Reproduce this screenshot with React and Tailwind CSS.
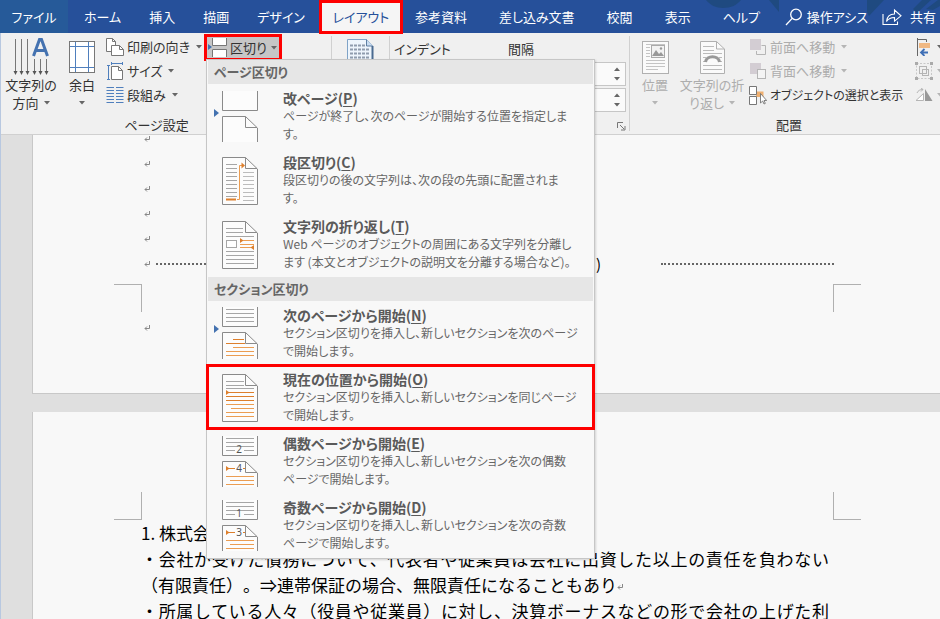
import React from "react";

function Caret({ className = "text-[#666]" }) {
  return (
    <svg width="6" height="4" viewBox="0 0 6 4" className={"shrink-0 " + className} aria-hidden="true">
      <path d="M0 0h6L3 3.6z" fill="currentColor" />
    </svg>
  );
}

function Lines({ ys, x1, x2, color = "#a6a6a6" }) {
  return ys.map((y) => (
    <path key={y} d={`M${x1} ${y}.5H${x2}`} fill="none" stroke={color} />
  ));
}

/* ---------- title bar ---------- */

function HeaderPattern() {
  return (
    <svg width="240" height="33" viewBox="0 0 240 33" className="absolute right-0 top-0" fill="#1f4a80" aria-hidden="true">
      <path d="M6 0C10 5 16 8 23 8C31 8 37 5 41 0z" />
      <path d="M69 0H79V12z" />
      <path d="M167 0H184L169 16L167 12z" />
      <path d="M213 9L222 0H231L217 13z" />
      <path d="M226 9L238 0H240V6L233 10z" />
    </svg>
  );
}

function TitleBar() {
  const before = ["ホーム", "挿入", "描画", "デザイン"];
  const after = ["参考資料", "差し込み文書", "校閲", "表示", "ヘルプ"];
  return (
    <header className="relative flex h-[33px] shrink-0 items-stretch bg-[#26509a] text-[13px] leading-5 text-white">
      <HeaderPattern />
      <nav className="relative flex items-stretch whitespace-nowrap">
        <button className="mr-[2px] w-[68px] bg-[#265a99]">ファイル</button>
        {before.map((t) => (
          <button key={t} className="px-[14px]">{t}</button>
        ))}
        <button className="h-[34px] w-[84px] border-[3px] border-[#fe0000] bg-[#f5f5f5] text-[#26509a]">レイアウト</button>
        {after.map((t, i) => (
          <button key={t} className={i === 0 ? "pl-3 pr-4" : "px-4"}>{t}</button>
        ))}
      </nav>
      <div className="relative ml-auto flex items-center gap-[14px] whitespace-nowrap pr-1">
        <button className="flex items-center gap-1">
          <svg width="18" height="18" viewBox="0 0 18 18" fill="none" stroke="white" strokeWidth="1.3" aria-hidden="true">
            <circle cx="11" cy="6.5" r="5.3" />
            <path d="M7.2 10.4L1 17" />
          </svg>
          操作アシス
        </button>
        <button className="flex items-center gap-2">
          <svg width="20" height="18" viewBox="0 0 20 18" fill="none" stroke="white" strokeWidth="1.1" aria-hidden="true">
            <path d="M1 6V16.5H15.5V13.5" />
            <path d="M4.5 13.5C5 8.5 8 6 12.5 6V2L19 7.8L12.5 13.2V9.5C9 9.5 6.5 10.5 4.5 13.5z" />
          </svg>
          共有
        </button>
      </div>
    </header>
  );
}

/* ---------- ribbon icons ---------- */

function TextDirectionIcon() {
  return (
    <svg width="36" height="38" viewBox="0 0 36 38" fill="none" aria-hidden="true">
      <path d="M2.5 1V35M8.5 1V35M14.5 1V35M21.5 21V35M27.5 21V35M33.5 21V35" stroke="#777" />
      <path d="M.5 33h4l-2 4zM6.5 33h4l-2 4zM12.5 33h4l-2 4zM19.5 33h4l-2 4zM25.5 33h4l-2 4zM31.5 33h4l-2 4z" fill="#555" />
      <path d="M20.5 18L26.5 1.5H28.5L34.5 18M22.8 12.5H32.2" stroke="#4472b0" strokeWidth="3" />
    </svg>
  );
}

function MarginsIcon() {
  return (
    <svg width="26" height="34" viewBox="0 0 26 34" fill="none" aria-hidden="true">
      <rect x=".5" y="1.5" width="25" height="31" fill="#fff" stroke="#777" />
      <path d="M6.5 2V32M19.5 2V32M1 6.5H25M1 27.5H25" stroke="#4f7fbd" />
    </svg>
  );
}

function OrientationIcon() {
  return (
    <svg width="18" height="18" viewBox="0 0 18 18" fill="#fff" stroke="#777" aria-hidden="true">
      <path d="M.5 .5H6.5L9.5 3.5V13.5H.5z" />
      <path d="M6.5 .5V3.5H9.5" fill="none" />
      <path d="M5.500 7.500H13.500L17.500 11.500V17.500H5.500z" />
      <path d="M13.500 7.500V11.500H17.500" fill="none" />
    </svg>
  );
}

function SizeIcon() {
  return (
    <svg width="18" height="18" viewBox="0 0 18 18" fill="none" aria-hidden="true">
      <path d="M5.500 4.500H12.500L16.500 8.500V17.500H5.500z" fill="#fff" stroke="#777" />
      <path d="M12.500 4.500V8.500H16.500" stroke="#777" />
      <path d="M2.500 3V17.500M1 3.500H4M1 17.500H4M5.500 1.500H16M5.500 0V3M16.500 0V3" stroke="#4f7fbd" />
    </svg>
  );
}

function ColumnsIcon() {
  return (
    <svg width="18" height="18" viewBox="0 0 18 18" fill="none" stroke="#4f7fbd" aria-hidden="true">
      {[1, 4, 7, 10, 13, 16].map((y) => (
        <path key={y} d={`M.5 ${y}.5H8M10 ${y}.5H17.500`} />
      ))}
    </svg>
  );
}

function BreaksIcon() {
  return (
    <svg width="20" height="19" viewBox="0 0 20 19" aria-hidden="true">
      <rect x="4" y="0" width="14" height="7" fill="#fff" />
      <rect x="4" y="11" width="14" height="8" fill="#fff" />
      <path d="M4.500 0V7.500H18.500V0M4.500 19V11.500H18.500V19" fill="none" stroke="#777" />
      <path d="M0 6L4 9L0 12z" fill="#4472b0" />
    </svg>
  );
}

function LineNumbersIcon() {
  return (
    <svg width="28" height="34" viewBox="0 0 28 34" fill="none" aria-hidden="true">
      <path d="M1.500 .5H20.500L26.500 7V33H1.500z" fill="#eef5fc" stroke="#7fa3c7" />
      <path d="M20.500 .5V7H26.500" fill="#c9dcf0" stroke="#5f7fa3" />
      <path d="M26.500 7V33" stroke="#4a6a90" strokeWidth="2" />
      {[6, 10, 14, 18].map((y) => (
        <path key={y} d={`M4 ${y}.5H${y < 8 ? 19 : 24}`} stroke="#8f9cad" strokeWidth="2" strokeDasharray="3 1" />
      ))}
    </svg>
  );
}

function PositionIcon() {
  return (
    <svg width="27" height="33" viewBox="0 0 27 33" fill="none" aria-hidden="true">
      <rect x=".5" y=".5" width="26" height="32" fill="#fafafa" stroke="#b0b0b0" />
      <path d="M4 3.500H23M4 6.500H8M4 9.500H8M4 12.500H8M4 15.500H8M4 19.500H23M4 22.500H23M4 25.500H23M4 28.500H16" stroke="#c4c4c4" />
      <rect x="9.500" y="4.500" width="13" height="12" fill="#f2f2f2" stroke="#aaa" />
      <path d="M10 15L14 9L17 13L19 11L22 15z" fill="#999" />
      <circle cx="19" cy="7.500" r="1.200" fill="#999" />
    </svg>
  );
}

function WrapTextIcon() {
  return (
    <svg width="25" height="33" viewBox="0 0 25 33" fill="none" aria-hidden="true">
      <path d="M.5 .5H16.500L24.500 8V32.500H.5z" fill="#fafafa" stroke="#b0b0b0" />
      <path d="M16.500 .5V8H24.500" stroke="#b0b0b0" />
      <path d="M3 5.500H14M3 9.500H14M3 12.500H22M3 16.500H6M19 16.500H22M3 20.500H5M20 20.500H22M3 24.500H22M3 28.500H22" stroke="#bbb" />
      <path d="M5.500 21C6.500 14 18.500 14 19.500 21" stroke="#999" strokeWidth="3" />
    </svg>
  );
}

function BringForwardIcon() {
  return (
    <svg width="18" height="18" viewBox="0 0 18 18" aria-hidden="true">
      <path d="M12.500 7.500H16.500V16.500H7.500V13" fill="none" stroke="#b5b5b5" />
      <rect x="1" y="1" width="11" height="11" fill="#d3cdd3" />
    </svg>
  );
}

function SendBackwardIcon() {
  return (
    <svg width="18" height="18" viewBox="0 0 18 18" aria-hidden="true">
      <rect x="1" y="1" width="11" height="11" fill="#d3cdd3" />
      <rect x="8.500" y="7.500" width="8" height="9" fill="#f4f4f4" stroke="#b5b5b5" />
    </svg>
  );
}

function SelectionPaneIcon() {
  return (
    <svg width="18" height="19" viewBox="0 0 18 19" aria-hidden="true">
      <path d="M7 5.500H14.500V11H7z" fill="#f0b070" />
      <path d="M.5 .5H7.500V8.500H.5zM.5 10.500H7.500V18.500H.5z" fill="#fff" stroke="#777" />
      <path d="M11.500 7.500V17L13.700 15L15 18L16.300 17.400L15 14.500H17.700z" fill="#fff" stroke="#666" strokeWidth=".8" />
    </svg>
  );
}

function AlignIcon() {
  return (
    <svg width="18" height="18" viewBox="0 0 18 18" fill="none" aria-hidden="true">
      <path d="M2.500 0V18" stroke="#666" />
      <path d="M3 1.500H11.500V4" stroke="#666" />
      <rect x="4" y="5" width="11" height="5" fill="#f0b883" />
      <path d="M13 14.500H6M9.500 11L6 14.500L9.500 18" stroke="#3f6fb5" strokeWidth="1.800" />
    </svg>
  );
}

function GroupIcon() {
  return (
    <svg width="18" height="18" viewBox="0 0 18 18" fill="none" stroke="#b5b5b5" aria-hidden="true">
      <rect x="1.500" y="1.500" width="15" height="15" strokeDasharray="2 1.500" stroke="#c8c8c8" />
      <rect x="4.500" y="4.500" width="7" height="7" />
      <rect x="7.500" y="7.500" width="6" height="6" />
      <path d="M0 0h3v3h-3zM15 0h3v3h-3zM0 15h3v3h-3zM15 15h3v3h-3z" fill="#aaa" stroke="none" />
    </svg>
  );
}

function RotateIcon() {
  return (
    <svg width="18" height="14" viewBox="0 0 18 14" aria-hidden="true">
      <path d="M10 1V13H17.500z" fill="#999" />
      <path d="M8.500 5.500V12.500H1z" fill="#fff" stroke="#b5b5b5" />
      <path d="M2 5C3 2.500 5 1.500 8 1.500M6 0L8 1.500L6 3.500" fill="none" stroke="#b5b5b5" />
    </svg>
  );
}

/* ---------- breaks menu ---------- */

function HalfPages({ top, bottom, children }) {
  return (
    <>
      <path d={`M15.500 ${top}V${top + 19.5}H50.500V${top}`} fill="#fcfcfc" stroke="#8a8a8a" />
      <path d={`M15.500 58V${bottom + 0.5}H38.500L50.500 ${bottom + 12}V58`} fill="#fcfcfc" stroke="#8a8a8a" />
      <path d={`M38.500 ${bottom + 0.5}V${bottom + 11.5}H50`} stroke="#8a8a8a" />
      {children}
    </>
  );
}

function FullPage({ children }) {
  return (
    <>
      <path d="M15.500 9.500H38.500L50.500 21V56.500H15.500z" fill="#fcfcfc" stroke="#8a8a8a" />
      <path d="M38.500 9.500V20.500H50" stroke="#8a8a8a" />
      {children}
    </>
  );
}

const ORANGE = "#eb9d52";
const DARK_ORANGE = "#dd7f2c";

function PageNumber({ x, y, children }) {
  return (
    <text x={x} y={y} textAnchor="middle" fontSize="10" fill="#555" fontFamily="Noto Sans">
      {children}
    </text>
  );
}

function NumberedPages({ first, second }) {
  return (
    <HalfPages top={7} bottom={32}>
      <Lines ys={[9, 13, 17]} x1={19} x2={47} />
      <path d="M19 21.500H28M37 21.500H47" stroke="#a6a6a6" />
      <PageNumber x={32} y={24}>{first}</PageNumber>
      <path d="M19 37L22.500 39.500L19 42z" fill={DARK_ORANGE} />
      <path d="M21 39.500H28M36 39.500H38" stroke={DARK_ORANGE} />
      <PageNumber x={32} y={43}>{second}</PageNumber>
      <Lines ys={[47, 55]} x1={19} x2={47} color={ORANGE} />
      <path d="M23 51.500H47" stroke={ORANGE} />
    </HalfPages>
  );
}

const ART = {
  page: (
    <>
      <HalfPages top={7} bottom={32} />
      <path d="M7 25L12 29L7 33z" fill="#4472b0" />
    </>
  ),
  column: (
    <FullPage>
      <Lines ys={[16, 20, 24, 28, 32, 36, 40, 44, 48]} x1={19} x2={30} />
      <Lines ys={[24, 28, 32, 36, 40, 44, 48, 52]} x1={36} x2={47} color="#bcbcbc" />
      <path d="M30 51.500H32.500V17.500H36" stroke={ORANGE} />
      <path d="M34.500 14.500L38 17.500L34.500 20.500z" fill={DARK_ORANGE} />
      <path d="M19 51.500H29" stroke={DARK_ORANGE} strokeWidth="2" />
    </FullPage>
  ),
  wrap: (
    <FullPage>
      <Lines ys={[16, 20]} x1={19} x2={36} />
      <Lines ys={[24, 39, 43, 47, 51]} x1={19} x2={47} />
      <rect x="19.500" y="28.500" width="10" height="7" fill="#fff" stroke="#a6a6a6" />
      <path d="M33 26L36.500 28.500L33 31z M47 33L43.500 35.500L47 38z" fill={DARK_ORANGE} />
      <path d="M36 28.500H47M33 32.500H47M33 35.500H44" stroke={ORANGE} />
    </FullPage>
  ),
  next: (
    <HalfPages top={6} bottom={31}>
      <Lines ys={[8, 12, 16, 20]} x1={19} x2={47} />
      <path d="M7 24L12 28L7 32z" fill="#4472b0" />
      <path d="M26 38.500H37M19 42.500H38" stroke={DARK_ORANGE} />
      <Lines ys={[50, 54]} x1={19} x2={47} color={ORANGE} />
      <path d="M26 46.500H47" stroke={ORANGE} />
    </HalfPages>
  ),
  continuous: (
    <FullPage>
      <Lines ys={[16, 20]} x1={19} x2={37} />
      <path d="M19 23.500H47" stroke="#a6a6a6" />
      <path d="M19 25L22.500 27.500L19 30z" fill={DARK_ORANGE} />
      <Lines ys={[27, 31, 35]} x1={19} x2={47} color={DARK_ORANGE} />
      <Lines ys={[39, 47, 51]} x1={19} x2={47} color={ORANGE} />
      <path d="M24 43.500H47" stroke={ORANGE} />
    </FullPage>
  ),
  even: <NumberedPages first="2" second="4" />,
  odd: <NumberedPages first="1" second="3" />,
};

const SECTIONS = [
  {
    title: "ページ区切り",
    items: [
      { art: "page", name: "改ページ", key: "P", lines: ["ページが終了し、次のページが開始する位置を指定しま", "す。"] },
      { art: "column", name: "段区切り", key: "C", lines: ["段区切りの後の文字列は、次の段の先頭に配置されま", "す。"] },
      { art: "wrap", name: "文字列の折り返し", key: "T", lines: ["Web ページのオブジェクトの周囲にある文字列を分離し", "ます (本文とオブジェクトの説明文を分離する場合など)。"] },
    ],
  },
  {
    title: "セクション区切り",
    items: [
      { art: "next", name: "次のページから開始", key: "N", lines: ["セクション区切りを挿入し、新しいセクションを次のページ", "で開始します。"] },
      { art: "continuous", name: "現在の位置から開始", key: "O", lines: ["セクション区切りを挿入し、新しいセクションを同じページ", "で開始します。"], marked: true },
      { art: "even", name: "偶数ページから開始", key: "E", lines: ["セクション区切りを挿入し、新しいセクションを次の偶数", "ページで開始します。"] },
      { art: "odd", name: "奇数ページから開始", key: "D", lines: ["セクション区切りを挿入し、新しいセクションを次の奇数", "ページで開始します。"] },
    ],
  },
];

function BreaksMenu() {
  return (
    <div className="absolute left-[2px] top-[26px] z-10 w-[389px] border border-[#c6c6c6] bg-[#f8f8f8] pb-px text-[12px] shadow-[1px_1px_2px_rgba(0,0,0,0.15)]">
      {SECTIONS.map((s, i) => (
        <section key={s.title}>
          <h2 className="mx-px bg-[#e6e6e6] pl-[6px] text-[13px] font-bold leading-6 text-[#666]">{s.title}</h2>
          <ul className={i === 0 ? "pb-px" : ""}>
            {s.items.map((it) => (
              <li key={it.key}>
                <button
                  className={
                    "flex h-16 w-full items-start gap-6 text-left " +
                    (it.marked ? "outline-[3px] -outline-offset-2 outline-[#fe0000]" : "")
                  }
                >
                  <svg width="52" height="64" viewBox="0 0 52 64" fill="none" className="shrink-0" aria-hidden="true">
                    {ART[it.art]}
                  </svg>
                  <span className="whitespace-nowrap pt-[5px] leading-[18px] text-[#666]">
                    <span className="block text-[14px] font-bold leading-[18px] text-[#5a5a5a]">
                      {it.name}(<u className="underline-offset-2">{it.key}</u>)
                    </span>
                    {it.lines.map((l) => (
                      <span key={l} className="block">{l}</span>
                    ))}
                  </span>
                </button>
              </li>
            ))}
          </ul>
        </section>
      ))}
    </div>
  );
}

/* ---------- ribbon ---------- */

function SmallButton({ icon, label, disabled, caret = true, small = false }) {
  return (
    <button disabled={disabled} className={"flex h-6 items-center " + (disabled ? "text-[#adadad]" : "text-[#333]")}>
      {icon}
      <span className={small ? "ml-[3px] text-[12px]" : "ml-[3px] mr-[6px]"}>{label}</span>
      {caret && <Caret className={disabled ? "text-[#b5b5b5]" : "text-[#666]"} />}
    </button>
  );
}

function Spinner({ label }) {
  return (
    <div className="flex h-6 border border-[#c6c6c6] bg-[#fafafa]">
      <input aria-label={label} className="w-[84px] bg-transparent px-1 outline-none" />
      <span className="flex w-4 flex-col items-center justify-between py-1 text-[#666]">
        <Caret className="rotate-180" />
        <Caret />
      </span>
    </div>
  );
}

function Ribbon() {
  return (
    <div className="flex h-[102px] shrink-0 items-stretch whitespace-nowrap border-b border-[#d0d0d0] bg-[#f0f0f0] text-[13px] leading-[18px] text-[#333]">
      <section className="flex w-[330px] shrink-0 flex-col">
        <div className="flex items-start">
          <button className="ml-[3px] flex w-[54px] flex-col items-center pt-[5px]">
            <TextDirectionIcon />
            <span>文字列の</span>
            <span className="flex items-center gap-[5px]">方向<Caret /></span>
          </button>
          <button className="ml-2 flex w-8 flex-col items-center pt-[5px]">
            <span className="flex h-[38px] items-center"><MarginsIcon /></span>
            <span>余白</span>
            <span className="flex h-[18px] items-center"><Caret /></span>
          </button>
          <div className="ml-2 flex w-[98px] flex-col items-start pt-[2px]">
            <SmallButton icon={<OrientationIcon />} label="印刷の向き" />
            <SmallButton icon={<SizeIcon />} label="サイズ" />
            <SmallButton icon={<ColumnsIcon />} label="段組み" />
          </div>
          <div className="relative pt-px">
            <button className="flex h-[27px] w-[78px] items-center border-[3px] border-[#fe0000] bg-[#c6c6c6] pl-px">
              <BreaksIcon />
              <span className="ml-[2px] mr-1">区切り</span>
              <Caret />
            </button>
            <BreaksMenu />
          </div>
        </div>
        <span className="mt-auto w-[311px] text-center">ページ設定</span>
      </section>
      <section className="my-[3px] w-[59px] shrink-0 border-x border-[#d0d0d0] pl-[14px] pt-[3px]">
        <LineNumbersIcon />
      </section>
      <section className="my-[3px] flex w-60 shrink-0 items-start border-r border-[#d0d0d0] pl-1 pr-[3px] pt-1">
        <span>インデント</span>
        <div className="ml-auto flex flex-col gap-[2px]">
          <span className="mb-[2px] -ml-4">間隔</span>
          <Spinner label="前の間隔" />
          <Spinner label="後の間隔" />
          <button aria-label="段落の設定" className="mt-2 self-end">
            <svg width="9" height="9" viewBox="0 0 9 9" fill="none" stroke="#777" aria-hidden="true">
              <path d="M.5 6V.5H6M3 3L7 7M8 4V8H4" />
            </svg>
          </button>
        </div>
      </section>
      <section className="flex min-w-0 grow flex-col overflow-hidden">
        <div className="flex items-start text-[#adadad]">
          <button disabled className="ml-[7px] flex w-9 shrink-0 flex-col items-center pt-[5px]">
            <span className="flex h-[38px] items-center"><PositionIcon /></span>
            <span>位置</span>
            <span className="flex h-[18px] items-center"><Caret className="text-[#b5b5b5]" /></span>
          </button>
          <button disabled className="ml-[5px] flex w-[68px] shrink-0 flex-col items-center pt-[5px]">
            <span className="flex h-[38px] items-center"><WrapTextIcon /></span>
            <span>文字列の折</span>
            <span className="flex items-center gap-[5px]">り返し<Caret className="text-[#b5b5b5]" /></span>
          </button>
          <div className="ml-[3px] flex shrink-0 flex-col items-start pt-[2px]">
            <SmallButton disabled icon={<BringForwardIcon />} label="前面へ移動" />
            <SmallButton disabled icon={<SendBackwardIcon />} label="背面へ移動" />
            <SmallButton icon={<SelectionPaneIcon />} label="オブジェクトの選択と表示" caret={false} small />
          </div>
          <div className="-mr-[3px] ml-auto flex flex-col pt-[2px]">
            <button aria-label="オブジェクトの配置" className="flex h-6 items-center gap-1"><AlignIcon /><Caret /></button>
            <button aria-label="グループ化" disabled className="flex h-6 items-center gap-1"><GroupIcon /><Caret className="text-[#b5b5b5]" /></button>
            <button aria-label="回転" disabled className="flex h-6 items-center gap-1"><RotateIcon /><Caret className="text-[#b5b5b5]" /></button>
          </div>
        </div>
        <span className="mt-auto pl-2 text-center">配置</span>
      </section>
    </div>
  );
}

/* ---------- document ---------- */

function ReturnMark() {
  return (
    <svg width="7" height="8" viewBox="0 0 7 8" fill="none" className="inline-block shrink-0" aria-hidden="true">
      <path d="M5.500 1V4.500H1M3 2.500L1 4.500L3 6.500" stroke="#888" />
    </svg>
  );
}

function CropMarks({ bottom }) {
  const edge = bottom ? "border-b" : "border-t";
  return (
    <div className="flex h-7 justify-between">
      <span className={"w-7 border-r border-[#b0b0b0] " + edge} />
      <span className={"w-7 border-l border-[#b0b0b0] " + edge} />
    </div>
  );
}

function Document() {
  return (
    <main className="flex grow bg-[#dfdfdf]">
      <div className="flex w-full flex-col gap-[18px] pl-[31px] font-[Noto_Sans_CJK_JP,sans-serif] text-[17px] leading-[26px] text-black [font-feature-settings:normal]">
        <article className="border-b border-l border-[#c8c8c8] bg-[#f8f8f8] pb-[61px] pl-[81px] pr-[79px]">
          {[0, 1, 2, 3, 4].map((n) => (
            <div key={n} className="flex h-[25px] items-start pl-[30px]"><ReturnMark /></div>
          ))}
          <div className="flex h-6 items-start pl-[30px] pr-[27px]">
            <div className="flex h-2 w-full items-center">
              <ReturnMark />
              <span className="ml-[5px] h-0 w-[430px] border-t-2 border-dotted border-[#666]" />
              <span className="ml-[10px] text-[15px]">)</span>
              <span className="ml-auto h-0 w-[173px] border-t-2 border-dotted border-[#666]" />
            </div>
          </div>
          <CropMarks />
          <div className="flex pl-[30px] pt-3"><ReturnMark /></div>
        </article>
        <article className="grow border-l border-[#c8c8c8] bg-[#f8f8f8] pl-[81px] pr-[79px] pt-20">
          <CropMarks bottom />
          <div className="pl-[27px] pr-8 [text-spacing-trim:space-all]">
            <p>1. 株式会社</p>
            <p className="text-justify">
              ・会社が受けた債務について、代表者や従業員は会社に出資した以上の責任を負わない（有限責任）。⇒連帯保証の場合、無限責任になることもあり
              <ReturnMark />
            </p>
            <p className="text-justify [text-align-last:justify]">
              ・所属している人々（役員や従業員）に対し、決算ボーナスなどの形で会社の上げた利
            </p>
          </div>
        </article>
      </div>
    </main>
  );
}

export default function App() {
  return (
    <div className="flex h-screen flex-col overflow-hidden font-[Noto_Sans_CJK_JP,sans-serif] [font-feature-settings:'palt']" lang="ja">
      <TitleBar />
      <div className="flex min-h-0 grow flex-col border-l border-[#b8c8e0]">
        <Ribbon />
        <Document />
      </div>
    </div>
  );
}
